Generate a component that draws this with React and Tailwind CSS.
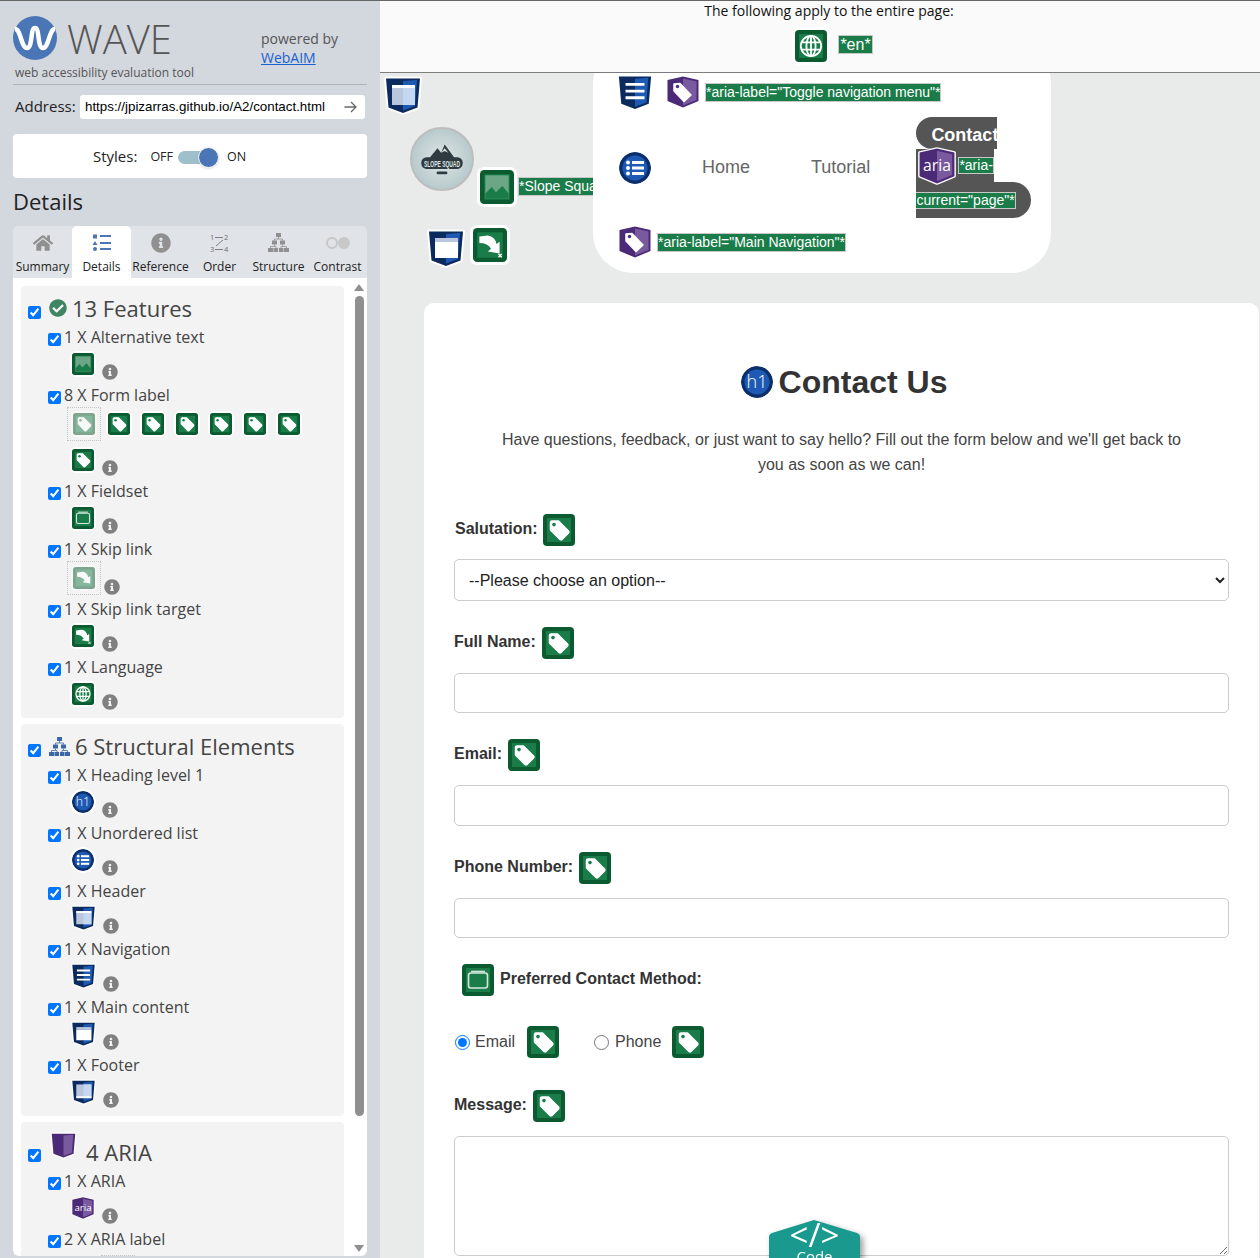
import { FaHome, FaInfoCircle, FaCheckCircle } from "react-icons/fa";

const GREEN_DARK = "#0b5a30";
const GREEN = "#1a7c48";

function TagGlyph() {
  return (
    <>
      <path d="M7.5 8.5 Q7.5 7 9 7 L15.5 7 L25.5 17 Q26.5 18 25.5 19 L19 25.5 Q18 26.5 17 25.5 L7.5 16 Z" fill="#fff" stroke="#fff" strokeWidth="1.5" strokeLinejoin="round" />
      <circle cx="11" cy="10.6" r="1.8" fill={GREEN} />
    </>
  );
}

function GlobeGlyph() {
  return (
    <g fill="none" stroke="#fff" strokeWidth="1.8">
      <circle cx="16" cy="16" r="10.2" />
      <ellipse cx="16" cy="16" rx="4.6" ry="10.2" />
      <path d="M16 5.8V26.2M6.5 12.4H25.5M6.5 19.6H25.5" />
    </g>
  );
}

function ImageGlyph() {
  return (
    <>
      <rect x="5" y="5" width="22" height="22" fill="#6ba787" />
      <path d="M5 27V22L11 16L15 21L21 15L27 22V27Z" fill={GREEN} />
    </>
  );
}

function FieldsetGlyph() {
  return (
    <g fill="none" stroke="#d5e8dc" strokeWidth="1.6">
      <rect x="6.5" y="9" width="19" height="15" rx="2.5" />
      <path d="M9 7.5H23" />
    </g>
  );
}

function SkipGlyph() {
  return <path d="M6 8L14 7Q21 8 22 15L25 13L25 24L14 22L17 19.5Q14 14 6 14Z" fill="#fff" />;
}

function GreenIcon({ kind, size = 32, halo = "ring-[3px]", target }) {
  return (
    <span className={`inline-flex shrink-0 rounded-[4px] ring-white ${halo}`}>
      <svg width={size} height={size} viewBox="0 0 32 32" className="block">
        <rect width="32" height="32" rx="4" fill={GREEN_DARK} />
        <rect x="4" y="4" width="24" height="24" fill={GREEN} />
        {kind === "tag" && <TagGlyph />}
        {kind === "globe" && <GlobeGlyph />}
        {kind === "image" && <ImageGlyph />}
        {kind === "fieldset" && <FieldsetGlyph />}
        {kind === "skip" && <SkipGlyph />}
        {target && <path d="M24 24.5L27 27.5M27 24.5L24 27.5" stroke="#fff" strokeWidth="1.2" />}
      </svg>
    </span>
  );
}

function Shield({ kind, w = 38, h = 39 }) {
  const dark = kind === "aria" ? "#4b2a78" : "#0b2a5e";
  const light = kind === "aria" ? "#7a5a9e" : "#1e5ab4";
  return (
    <svg width={w} height={h} viewBox="0 0 38 39" className="block shrink-0 overflow-visible">
      <path d="M2 2.500H36L33.500 31.500L19 37L4.500 31.500Z" fill={dark} stroke="#fff" strokeWidth="4" strokeLinejoin="round" paintOrder="stroke" />
      <path d="M19 5L33 4L31 30L19 34.500Z" fill={light} />
      {kind === "header" && (
        <>
          <rect x="8" y="9" width="23" height="20" fill="#b9c6dc" />
          <rect x="19" y="9" width="12" height="20" fill="#c5d8f2" />
          <rect x="8" y="9" width="23" height="3" fill="#fff" />
        </>
      )}
      {kind === "footer" && (
        <>
          <rect x="8" y="8" width="23" height="20" fill="#b9c6dc" />
          <rect x="19" y="8" width="12" height="20" fill="#c5d8f2" />
          <rect x="8" y="26" width="23" height="3" fill="#fff" />
        </>
      )}
      {kind === "main" && (
        <>
          <rect x="8" y="9" width="23" height="4" fill="#b9c6dc" />
          <rect x="8" y="13" width="23" height="16" fill="#fff" />
        </>
      )}
      {kind === "nav" && (
        <path d="M9 11H29M9 18H29M9 25H29" stroke="#fff" strokeWidth="3" />
      )}
    </svg>
  );
}

function AriaShield({ size = 32, tag, text }) {
  return (
    <svg width={size} height={size} viewBox="0 0 32 32" className="block shrink-0 overflow-visible">
      <path d="M0.500 4L16 0.500L31.500 4V25L16 31.500L0.500 25Z" fill="#4b2a78" stroke="#fff" strokeWidth="2.500" strokeLinejoin="round" paintOrder="stroke" />
      <path d="M16 2.500L29.500 5.500V24L16 29.500Z" fill="#7a5a9e" />
      {tag && (
        <>
          <path d="M7 8L13 7.500L24 19L17 25.500L7 15Z" fill="#fff" stroke="#fff" strokeWidth="1.500" strokeLinejoin="round" />
          <circle cx="10.500" cy="10.500" r="1.700" fill="#4b2a78" />
        </>
      )}
      {text && (
        <text x="16" y="20.500" textAnchor="middle" fontSize="14" fill="#fff" fontFamily="Open Sans, sans-serif">aria</text>
      )}
    </svg>
  );
}

function RoundIcon({ kind, size = 32 }) {
  return (
    <svg width={size} height={size} viewBox="0 0 32 32" className="block shrink-0 rounded-full ring-2 ring-white">
      <circle cx="16" cy="16" r="16" fill="#0b2f6b" />
      <circle cx="16" cy="16" r="12.500" fill="#1e5ab4" />
      {kind === "h1" ? (
        <text x="16" y="22" textAnchor="middle" fontSize="18" fontWeight="300" fill="#fff" fontFamily="Open Sans, sans-serif">h1</text>
      ) : (
        <g fill="#fff">
          <circle cx="9" cy="10.500" r="2" />
          <circle cx="9" cy="16" r="2" />
          <circle cx="9" cy="21.500" r="2" />
          <rect x="13" y="9" width="12" height="3" />
          <rect x="13" y="14.500" width="12" height="3" />
          <rect x="13" y="20" width="12" height="3" />
        </g>
      )}
    </svg>
  );
}

function SiteMap({ color, w = 21, h = 19 }) {
  return (
    <svg width={w} height={h} viewBox="0 0 21 19" className="block shrink-0">
      <g fill={color}>
        <rect x="8" y="0" width="5" height="4" />
        <rect x="4" y="7.500" width="5" height="4" />
        <rect x="12" y="7.500" width="5" height="4" />
        <rect x="0" y="15" width="5" height="4" />
        <rect x="5.500" y="15" width="4.500" height="4" />
        <rect x="11" y="15" width="4.500" height="4" />
        <rect x="16" y="15" width="5" height="4" />
      </g>
      <path d="M10.500 4V6H6.500V7.500M10.500 6H14.500V7.500M6.500 11.500V13.500H2.500V15M6.500 13.500H8V15M14.500 11.500V13.500H13V15M14.500 13.500H18.500V15" fill="none" stroke={color} strokeWidth="0.800" />
    </svg>
  );
}

function Label({ children, className = "" }) {
  return (
    <span className={`bg-[#1a7c48] border border-[#c8c8c8] text-white text-[14px] leading-[15px] whitespace-nowrap font-['Liberation_Sans',sans-serif] ${className}`}>
      {children}
    </span>
  );
}

function Info({ ml = "ml-[8px]", mt = "mt-[11px]" }) {
  return <FaInfoCircle className={`shrink-0 text-[#808080] text-[16px] ${ml} ${mt}`} />;
}

function Faded({ children }) {
  return (
    <span className="flex w-[34px] h-[34px] shrink-0 items-center justify-center border border-dotted border-[#c4c4c4]">
      <span className="opacity-50 flex">{children}</span>
    </span>
  );
}

function Item({ label, height = "h-[34px]", pad = "pl-[51px] pt-[3px]", children }) {
  return (
    <div>
      <div className="flex items-center h-[24px] pl-[27px]">
        <input type="checkbox" defaultChecked className="w-[13px] h-[13px] m-0 mt-[3px]" />
        <span className="ml-[3px] -mt-[2px] text-[16px] text-[#444]">{label}</span>
      </div>
      <div className={`flex items-start ${height} ${pad}`}>{children}</div>
    </div>
  );
}

const small = "ring-2";

function WaveSidebar() {
  return (
    <aside className="w-[380px] shrink-0 h-[1258px] bg-[#d3d7de] font-['Open_Sans',sans-serif] px-[13px] overflow-hidden">
      <div className="flex h-[84px] border-b border-[#b0b4ba]">
        <div className="w-[248px] relative">
          <div className="flex items-start pt-[15px]">
            <svg width="44" height="44" viewBox="0 0 44 44" className="block shrink-0">
              <circle cx="22" cy="22" r="22" fill="#4a76b6" />
              <path d="M2 13C8 13 8 32 14 32C20 32 17 12 22 12C27 12 24 32 30 32C36 32 36 13 42 13" fill="none" stroke="#fff" strokeWidth="4.500" />
            </svg>
            <span className="ml-[10px] text-[40px] leading-[48px] font-light text-[#555] -mt-[1px]">WAVE</span>
          </div>
          <p className="ml-[2px] mt-px text-[12px] leading-[17px] text-[#555] whitespace-nowrap">web accessibility evaluation tool</p>
        </div>
        <div className="pt-[28px] text-[14px] leading-[19px] text-[#555]">
          <div>powered by</div>
          <a className="text-[#1a5fd0] underline">WebAIM</a>
        </div>
      </div>

      <div className="flex items-center mt-[10px] h-[24px]">
        <span className="ml-[2px] -mt-[2px] text-[15px] text-[#222]">Address:</span>
        <div className="ml-auto mr-[2px] w-[285px] h-[24px] bg-white rounded-[3px] flex items-center justify-between pl-[5px] pr-[8px]">
          <span className="text-[13.333px] text-black font-['Liberation_Sans',sans-serif] whitespace-nowrap">https://jpizarras.github.io/A2/contact.html</span>
          <svg width="13" height="12" viewBox="0 0 13 12" className="block">
            <path d="M0.500 6H12M7 1L12 6L7 11" fill="none" stroke="#666" strokeWidth="1.300" />
          </svg>
        </div>
      </div>

      <div className="flex items-center h-[44px] mt-[15px] bg-white rounded-[4px] pl-[80px] text-[#222]">
        <span className="text-[15px]">Styles:</span>
        <span className="ml-[13px] mt-[2px] text-[12.500px]">OFF</span>
        <span className="relative ml-[5px] mt-[2px] w-[41px] h-[13px] bg-[#9fc0cb] rounded-full">
          <span className="absolute right-0 -top-[4px] w-[21px] h-[21px] rounded-full bg-[#4a76b6] border border-white shadow"></span>
        </span>
        <span className="ml-[8px] mt-[2px] text-[12.500px]">ON</span>
      </div>

      <h2 className="mt-[8px] text-[22px] leading-[30px] text-[#222]">Details</h2>

      <div className="flex mt-[10px] h-[52px] bg-[#e0e3e7] rounded-t-[5px] text-[12px] text-[#222]">
        <Tab label="Summary"><FaHome className="text-[#909090] text-[20px]" /></Tab>
        <Tab label="Details" active>
          <svg width="20" height="18" viewBox="0 0 20 18" className="block">
            <g fill="#4a76b6">
              <rect x="1" y="0.500" width="4" height="4" />
              <path d="M3 7L5.500 11H0.500Z" />
              <circle cx="3" cy="15" r="2" />
              <rect x="8" y="1" width="11" height="2" />
              <rect x="8" y="8" width="11" height="2" />
              <rect x="8" y="14" width="11" height="2" />
            </g>
          </svg>
        </Tab>
        <Tab label="Reference"><FaInfoCircle className="text-[#909090] text-[20px]" /></Tab>
        <Tab label="Order">
          <svg width="20" height="20" viewBox="0 0 20 20" className="block">
            <g fontSize="7.500" fill="#707070" fontFamily="Open Sans, sans-serif">
              <text x="0" y="7">1</text>
              <text x="14" y="7">2</text>
              <text x="0" y="19">3</text>
              <text x="14" y="19">4</text>
            </g>
            <path d="M5 4.500H13M5 16.500H13M13 7L6 13" stroke="#808080" strokeWidth="1" fill="none" />
          </svg>
        </Tab>
        <Tab label="Structure"><SiteMap color="#909090" /></Tab>
        <Tab label="Contrast">
          <svg width="26" height="14" viewBox="0 0 26 14" className="block">
            <circle cx="7" cy="7" r="5" fill="none" stroke="#c8c8c8" strokeWidth="2" />
            <circle cx="19" cy="7" r="6" fill="#c8c8c8" />
          </svg>
        </Tab>
      </div>

      <div className="flex h-[978px] bg-white rounded-b-[6px] overflow-hidden">
        <div className="w-[340px] pl-[8px] pt-[8px] flex flex-col">
          <Group>
            <div className="flex items-center pl-[7px] h-[24px] mb-[4px]">
              <input type="checkbox" defaultChecked className="w-[13px] h-[13px] m-0 mt-[4px]" />
              <FaCheckCircle className="ml-[8px] text-[#3f8463] text-[18px] -mt-[4px]" />
              <span className="ml-[5px] -mt-[4px] text-[22px] text-[#444]">13 Features</span>
            </div>
            <Item label="1 X Alternative text">
              <GreenIcon kind="image" size={22} halo={small} />
              <Info />
            </Item>
            <Item label="8 X Form label" height="h-[72px]" pad="flex-col pl-[46px]">
              <div className="flex items-center h-[32px]">
                <Faded><GreenIcon kind="tag" size={22} halo={small} /></Faded>
                <span className="flex ml-[7px] gap-[12px]">
                  {[1, 2, 3, 4, 5, 6].map((n) => (
                    <GreenIcon key={n} kind="tag" size={22} halo={small} />
                  ))}
                </span>
              </div>
              <div className="flex items-start pl-[5px] pt-[9px]">
                <GreenIcon kind="tag" size={22} halo={small} />
                <Info />
              </div>
            </Item>
            <Item label="1 X Fieldset">
              <GreenIcon kind="fieldset" size={22} halo={small} />
              <Info />
            </Item>
            <Item label="1 X Skip link" height="h-[36px]" pad="pl-[46px]">
              <span className="-mt-px"><Faded><GreenIcon kind="skip" size={22} halo={small} /></Faded></span>
              <Info ml="ml-[3px]" mt="mt-[17px]" />
            </Item>
            <Item label="1 X Skip link target">
              <GreenIcon kind="skip" size={22} halo={small} target />
              <Info />
            </Item>
            <Item label="1 X Language">
              <GreenIcon kind="globe" size={22} halo={small} />
              <Info />
            </Item>
          </Group>

          <div className="h-[6px] shrink-0"></div>

          <Group>
            <div className="flex items-center pl-[7px] h-[24px] mb-[4px]">
              <input type="checkbox" defaultChecked className="w-[13px] h-[13px] m-0 mt-[4px]" />
              <span className="ml-[8px] -mt-[4px]"><SiteMap color="#3c66a8" /></span>
              <span className="ml-[5px] -mt-[4px] text-[22px] text-[#444]">6 Structural Elements</span>
            </div>
            <Item label="1 X Heading level 1">
              <RoundIcon kind="h1" size={22} />
              <Info />
            </Item>
            <Item label="1 X Unordered list">
              <RoundIcon kind="ul" size={22} />
              <Info />
            </Item>
            <Item label="1 X Header" pad="pl-[50px] pt-[1px]">
              <Shield kind="header" w={25} h={26} />
              <Info ml="ml-[7px]" mt="mt-[13px]" />
            </Item>
            <Item label="1 X Navigation" pad="pl-[50px] pt-[1px]">
              <Shield kind="nav" w={25} h={26} />
              <Info ml="ml-[7px]" mt="mt-[13px]" />
            </Item>
            <Item label="1 X Main content" pad="pl-[50px] pt-[1px]">
              <Shield kind="main" w={25} h={26} />
              <Info ml="ml-[7px]" mt="mt-[13px]" />
            </Item>
            <Item label="1 X Footer" pad="pl-[50px] pt-[1px]">
              <Shield kind="footer" w={25} h={26} />
              <Info ml="ml-[7px]" mt="mt-[13px]" />
            </Item>
          </Group>

          <div className="h-[6px] shrink-0"></div>

          <Group>
            <div className="flex items-end pl-[7px] h-[35px] mb-[4px] -mt-[3px]">
              <input type="checkbox" defaultChecked className="w-[13px] h-[13px] m-0 mb-[4px]" />
              <span className="ml-[9px] mb-[7px]"><Shield kind="aria" w={27} h={27} /></span>
              <span className="ml-[9px] -mb-px text-[22px] leading-[30px] text-[#444]">4 ARIA</span>
            </div>
            <Item label="1 X ARIA">
              <AriaShield size={22} text />
              <Info />
            </Item>
            <Item label="2 X ARIA label" pad="pl-[46px]">
              <span className="mt-[3px] ml-[34px]"><Faded><AriaShield size={22} tag /></Faded></span>
            </Item>
          </Group>
        </div>
        <div className="w-[14px] ml-auto mr-px flex flex-col items-center pt-[6px]">
          <span className="w-0 h-0 border-x-[5px] border-x-transparent border-b-[7px] border-b-[#8f8f8f]"></span>
          <span className="w-[9px] h-[820px] mt-[5px] rounded-full bg-[#8f8f8f]"></span>
          <span className="w-0 h-0 mt-[129px] border-x-[5px] border-x-transparent border-t-[7px] border-t-[#8f8f8f]"></span>
        </div>
      </div>
    </aside>
  );
}

function Tab({ label, active, children }) {
  return (
    <div className={`w-[59px] flex flex-col items-center ${active ? "bg-white rounded-t-[5px]" : ""}`}>
      <span className="h-[33px] flex items-center justify-center">{children}</span>
      <span className="whitespace-nowrap leading-[16px]">{label}</span>
    </div>
  );
}

function Group({ children }) {
  return <section className="bg-[#f3f3f3] w-[323px] rounded-[4px] pt-[12px] pb-[4px] shrink-0">{children}</section>;
}

function SiteLogo() {
  return (
    <div className="w-[64px] h-[64px] shrink-0 rounded-full border-2 border-[#bdbdbd] bg-[radial-gradient(circle,#dfe6e6,#a9bfc2)] flex items-center justify-center">
      <svg width="48" height="36" viewBox="0 0 52 40" className="block">
        <path d="M12 19L21 8L25 13L29 4L40 19Z" fill="#2f3b40" />
        <path d="M25 13L29 8L33 13L29 11Z" fill="#dfe6e6" />
        <rect x="3" y="18" width="46" height="13" rx="6" fill="#2f3b40" />
        <text x="26" y="28.500" textAnchor="middle" fontSize="10" fontWeight="700" fill="#dfe6e6" fontFamily="Liberation Sans, sans-serif" textLength="40" lengthAdjust="spacingAndGlyphs">SLOPE SQUAD</text>
        <rect x="20" y="34" width="12" height="3" rx="1.500" fill="#2f3b40" />
      </svg>
    </div>
  );
}

function FormLabel({ children }) {
  return <label className="-mt-[2px] font-bold text-[16px] text-[#333]">{children}</label>;
}

function Field({ label, children }) {
  return (
    <>
      <div className="flex items-center h-[32px] mt-[26px]">
        <FormLabel>{label}</FormLabel>
        <span className="ml-[6px] flex"><GreenIcon kind="tag" /></span>
      </div>
      {children}
    </>
  );
}

const inputClass = "block w-full mt-[14px] border border-[#ccc] rounded-[5px] bg-white";

export default function App() {
  return (
    <div className="flex h-[1258px] w-[1260px] overflow-hidden border-t border-[#666] bg-[#e9eaea] font-['Liberation_Sans',sans-serif]">
      <WaveSidebar />

      <div className="relative flex-1 flex flex-col min-w-0 -mt-px">
        <div className="relative z-10 h-[73px] shrink-0 bg-[#fafafa] border-b border-[#7d7d7d] flex flex-col items-center pl-[18px] font-['Open_Sans',sans-serif]">
          <p className="text-[14px] leading-[22px] text-[#111]">The following apply to the entire page:</p>
          <div className="flex items-center mt-[8px] ml-[10px]">
            <GreenIcon kind="globe" />
            <Label className="ml-[11px] -mt-[3px] text-[16px] leading-[17px] px-[1px]">*en*</Label>
          </div>
        </div>

        <header className="flex h-[230px] shrink-0">
          <div className="w-[213px] shrink-0 pl-[4px] pt-[3px] overflow-hidden">
            <Shield kind="header" />
            <div className="flex items-start ml-[26px] mt-[12px]">
              <SiteLogo />
              <span className="ml-[6px] mt-[43px]"><GreenIcon kind="image" size={34} /></span>
              <Label className="ml-[4px] mt-[50px] text-[14.500px] py-[1px] px-0">*Slope Squad Logo*</Label>
            </div>
            <div className="flex items-center ml-[43px] mt-[17px]">
              <Shield kind="main" />
              <span className="ml-[8px]"><GreenIcon kind="skip" size={34} target /></span>
            </div>
          </div>

          <nav className="w-[458px] h-[230px] -mt-[30px] pt-[31px] pl-[24px] bg-white rounded-[40px] shrink-0">
            <div className="flex items-center h-[36px]">
              <Shield kind="nav" w={36} h={37} />
              <span className="ml-[14px]"><AriaShield tag /></span>
              <Label className="ml-[6px] py-[1px]">*aria-label="Toggle navigation menu"*</Label>
            </div>
            <div className="flex items-center h-[101px] mt-[7px]">
              <span className="ml-[2px]"><RoundIcon kind="ul" /></span>
              <a className="ml-[51px] text-[18px] text-[#666]">Home</a>
              <a className="ml-[61px] text-[18px] text-[#666]">Tutorial</a>
              <div className="ml-[46px] w-[115px] flex flex-col">
                <div className="w-[81px] h-[32px] bg-[#555] rounded-l-[16px] pl-[15px] overflow-hidden">
                  <span className="text-[18px] leading-[36px] font-bold text-white whitespace-nowrap">Contact</span>
                </div>
                <div className="w-[78px] h-[33px] bg-[#555] flex items-center pl-[3px]">
                  <span className="relative z-[1]"><AriaShield size={36} text /></span>
                  <Label className="ml-[3px]">*aria-</Label>
                </div>
                <div className="w-[115px] h-[36px] bg-[#555] rounded-r-[18px] flex items-center">
                  <Label className="border-l-0">current="page"*</Label>
                </div>
              </div>
            </div>
            <div className="flex items-center h-[32px] mt-[8px] ml-[2px]">
              <AriaShield tag />
              <Label className="ml-[6px] py-[1px]">*aria-label="Main Navigation"*</Label>
            </div>
          </nav>
        </header>

        <main className="ml-[44px] w-[835px] pt-[61px] px-[30px] bg-white rounded-tl-[10px] rounded-tr-[10px] shrink-0 h-[955px]">
          <h1 className="flex items-center justify-center h-[36px] pl-[5px] text-[32px] font-bold text-[#333]">
            <RoundIcon kind="h1" />
            <span className="ml-[6px]">Contact Us</span>
          </h1>
          <p className="mt-[27px] text-center text-[16px] leading-[25px] text-[#444]">
            Have questions, feedback, or just want to say hello? Fill out the form below and we'll get back to<br />
            you as soon as we can!
          </p>

          <div className="flex items-center h-[32px] mt-[37px] ml-px">
            <FormLabel>Salutation:</FormLabel>
            <span className="ml-[5px] flex"><GreenIcon kind="tag" /></span>
          </div>
          <select className="block w-full mt-[13px] h-[42px] pl-[10px] border border-[#ccc] rounded-[5px] bg-white text-[16px] text-[#222]">
            <option>--Please choose an option--</option>
          </select>

          <Field label="Full Name:">
            <input className={`${inputClass} h-[40px]`} />
          </Field>
          <Field label="Email:">
            <input className={`${inputClass} h-[41px]`} />
          </Field>
          <Field label="Phone Number:">
            <input className={`${inputClass} h-[40px]`} />
          </Field>

          <div className="flex items-center h-[32px] mt-[26px] ml-[8px]">
            <GreenIcon kind="fieldset" />
            <span className="ml-[6px] -mt-[3px] font-bold text-[16px] text-[#333]">Preferred Contact Method:</span>
          </div>

          <div className="flex items-center h-[32px] mt-[30px] text-[16px] text-[#444]">
            <input type="radio" name="contact" defaultChecked className="w-[15px] h-[15px] m-0 ml-px" />
            <span className="ml-[5px]">Email</span>
            <span className="ml-[12px] flex"><GreenIcon kind="tag" /></span>
            <input type="radio" name="contact" className="w-[15px] h-[15px] m-0 ml-[35px]" />
            <span className="ml-[6px]">Phone</span>
            <span className="ml-[11px] flex"><GreenIcon kind="tag" /></span>
          </div>

          <div className="flex items-center h-[32px] mt-[32px]">
            <FormLabel>Message:</FormLabel>
            <span className="ml-[6px] flex"><GreenIcon kind="tag" /></span>
          </div>
          <textarea className={`${inputClass} h-[120px]`}></textarea>
        </main>

        <div className="absolute left-[389px] top-[1220px] w-[91px] h-[60px] drop-shadow-[3px_3px_3px_rgba(0,0,0,0.4)]">
          <svg width="91" height="60" viewBox="0 0 91 60" className="absolute inset-0 block">
            <path d="M0 17Q0 14 3 13L45 0L88 13Q91 14 91 17V60H0Z" fill="#1a9a8f" />
          </svg>
          <div className="relative flex flex-col items-center text-white font-['Open_Sans',sans-serif]">
            <span className="text-[33px] leading-[30px]">&lt;/&gt;</span>
            <span className="text-[15px] leading-[18px] -mt-[3px]">Code</span>
          </div>
        </div>
      </div>
    </div>
  );
}
